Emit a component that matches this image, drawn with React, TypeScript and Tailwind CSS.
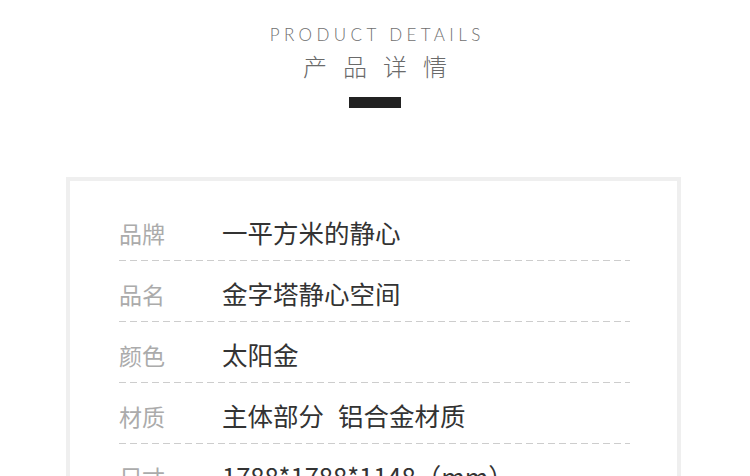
import React from 'react';

const rows = [
  { label: '品牌', value: '一平方米的静心' },
  { label: '品名', value: '金字塔静心空间' },
  { label: '颜色', value: '太阳金' },
  { label: '材质', value: '主体部分', extra: '铝合金材质' },
  { label: '尺寸', value: '1788*1788*1148（mm）' },
];

export default function App() {
  return (
    <div
      className="w-[750px] h-[476px] overflow-hidden bg-white"
      style={{ fontFamily: '"Noto Sans CJK SC", "Noto Sans", sans-serif' }}
    >
      {/* Heading */}
      <div className="flex flex-col items-center pt-[24px]">
        <div
          className="text-[17px] leading-[22px] font-light tracking-[4.4px] pl-[4.4px] text-[#6f6f6f]"
          style={{ fontFamily: 'Lato, "Open Sans", sans-serif' }}
        >
          PRODUCT DETAILS
        </div>
        <div className="mt-[5px] text-[24px] leading-[30px] font-light tracking-[16px] pl-[16px] text-[#6a6a6a]">
          产品详情
        </div>
        <div className="mt-[16px] w-[52px] h-[11px] bg-[#222222]" />
      </div>

      {/* Card */}
      <div className="ml-[66px] mt-[69px] w-[615px] border-4 border-[#efefef] pt-[19px] pl-[49px] pr-[47px]">
        {rows.map((r) => (
          <div key={r.label}>
            <div className="flex items-center pt-[17px] pb-[13px]">
              <div className="w-[103px] text-[23px] leading-[30px] text-[#ababab] translate-y-[1px]">
                {r.label}
              </div>
              <div className="flex gap-[14px] text-[25.5px] leading-[30px] text-[#333333] whitespace-nowrap">
                <span>{r.value}</span>
                {r.extra && <span>{r.extra}</span>}
              </div>
            </div>
            <div className="h-px bg-[repeating-linear-gradient(90deg,#cdcdcd_0_7px,transparent_7px_11px)]" />
          </div>
        ))}
      </div>
    </div>
  );
}
